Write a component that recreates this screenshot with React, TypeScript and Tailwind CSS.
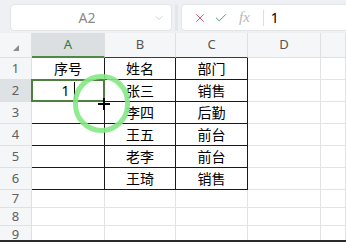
import { ChevronDown, X, Check } from 'lucide-react';

const cols = [
  { key: 'A', w: 'w-[73px]' },
  { key: 'B', w: 'w-[71px]' },
  { key: 'C', w: 'w-[72px]' },
  { key: 'D', w: 'w-[73px]' },
  { key: 'E', w: 'w-[25px]' },
];

const rows: { n: number; h: string; cells: string[] }[] = [
  { n: 1, h: 'h-[22px]', cells: ['序号', '姓名', '部门'] },
  { n: 2, h: 'h-[22px]', cells: ['1', '张三', '销售'] },
  { n: 3, h: 'h-[22px]', cells: ['', '李四', '后勤'] },
  { n: 4, h: 'h-[22px]', cells: ['', '王五', '前台'] },
  { n: 5, h: 'h-[22px]', cells: ['', '老李', '前台'] },
  { n: 6, h: 'h-[22px]', cells: ['', '王琦', '销售'] },
  { n: 7, h: 'h-[18px]', cells: [] },
  { n: 8, h: 'h-[18px]', cells: [] },
  { n: 9, h: 'h-[18px]', cells: [] },
];

export default function App() {
  return (
    <div
      className="w-[346px] h-[242px] overflow-hidden bg-white relative"
      style={{ fontFamily: '"Noto Sans", "Noto Sans CJK SC", sans-serif' }}
    >
      {/* formula bar */}
      <div className="h-[33px] bg-[#eef0f3] flex items-start pt-[4px] pl-[10px]">
        <div className="w-[162px] h-[27px] bg-white rounded-[4px] border border-[#e3e5e8] flex items-center">
          <span className="flex-1 text-center text-[14px] text-[#8a8a8a] pl-[10px]">A2</span>
          <ChevronDown className="w-3 h-3 text-[#c4c4c4] mr-[6px]" strokeWidth={1.5} />
        </div>
        <div className="w-[9px] h-[27px] flex justify-center">
          <div className="w-[3px] h-full bg-[#e4e6ea] rounded" />
        </div>
        <div className="flex-1 h-[27px] bg-white rounded-l-[4px] border border-r-0 border-[#e3e5e8] flex items-center pl-[11px]">
          <X className="w-[14px] h-[14px] text-[#d2556f]" strokeWidth={1.6} />
          <Check className="w-[14px] h-[14px] text-[#3c9a6a] ml-[7px]" strokeWidth={1.6} />
          <span
            className="ml-[11px] text-[15px] italic text-[#b8b8b8] leading-none"
            style={{ fontFamily: '"Liberation Serif", serif' }}
          >
            fx
          </span>
          <div className="w-px h-[16px] bg-[#dedede] ml-[13px]" />
          <span className="ml-[7px] text-[14px] text-black">1</span>
        </div>
      </div>

      {/* sheet */}
      <div className="h-[207px] overflow-hidden">
        {/* column header */}
        <div className="flex h-[25px] bg-[#f5f6f7]">
          <div className="w-[32px] relative border-r border-b border-[#e0e0e0]">
            <div className="absolute right-[12px] bottom-[6px] w-0 h-0 border-l-[6px] border-l-transparent border-b-[6px] border-b-[#8c8c8c]" />
          </div>
          {cols.map((c) => (
            <div
              key={c.key}
              className={`${c.w} flex items-center justify-center text-[13px] border-r border-[#e0e0e0] ${
                c.key === 'A'
                  ? 'bg-[#dcdfe2] text-[#2f7a3c] border-b-2 border-b-[#4e8a3f]'
                  : c.key === 'B' || c.key === 'C'
                  ? 'text-[#555] border-b border-b-[#3a3a3a]'
                  : 'text-[#555] border-b border-b-[#e0e0e0]'
              }`}
            >
              {c.key === 'E' ? '' : c.key}
            </div>
          ))}
        </div>

        {rows.map((r) => (
          <div key={r.n} className={`flex ${r.h}`}>
            <div
              className={`w-[32px] flex items-center justify-center text-[13px] text-[#606060] border-r border-b border-[#e0e0e0] ${
                r.n === 2 ? 'bg-[#dfe2e5]' : 'bg-[#f5f6f7]'
              }`}
            >
              {r.n}
            </div>
            {cols.map((c, i) => {
              const inTable = i < 3 && r.n <= 6;
              const text = r.cells[i] ?? '';
              return (
                <div
                  key={c.key}
                  className={`${c.w} relative flex items-center justify-center text-[14px] text-black border-r border-b ${
                    inTable ? 'border-[#1a1a1a]' : 'border-[#e3e3e3]'
                  } ${i === 0 && r.n <= 6 ? 'border-r-[#1a1a1a]' : ''}`}
                >
                  {text}
                  {r.n === 2 && i === 0 && (
                    <>
                      <div className="w-px h-[17px] bg-black ml-[4px]" />
                      <div className="absolute -left-px -top-px -right-px -bottom-px border-2 border-[#4e7f3e]" />
                    </>
                  )}
                </div>
              );
            })}
          </div>
        ))}
      </div>
      <div className="h-[2px] bg-[#2b2b2b]" />

      {/* click highlight + cursor */}
      <div className="absolute left-[73px] top-[74px] w-[57px] h-[59px] rounded-full border-[5px] border-[#84e884] opacity-90" />
      <div className="absolute left-[98px] top-[98px] w-[12px] h-[12px]">
        <div className="absolute left-[5px] top-0 w-[2px] h-[12px] bg-black" />
        <div className="absolute top-[5px] left-0 h-[2px] w-[12px] bg-black" />
      </div>
    </div>
  );
}
